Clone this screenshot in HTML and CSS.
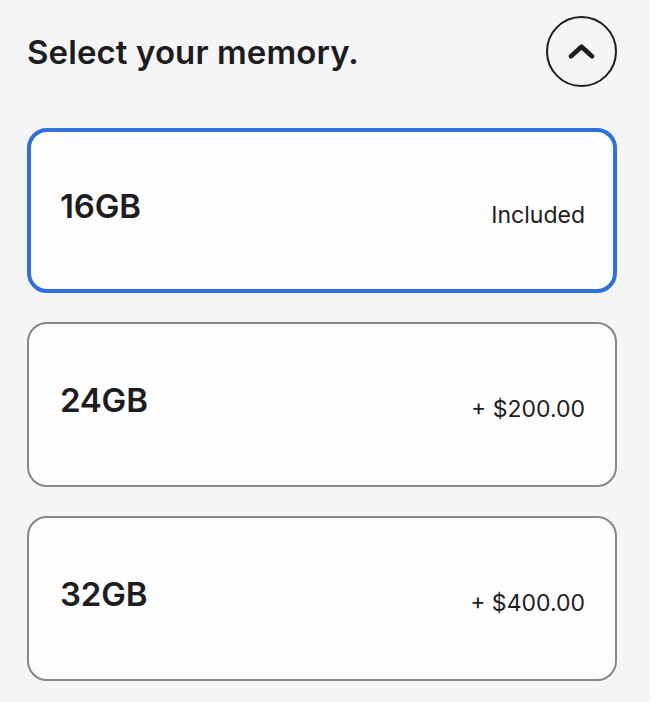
FILE: index.html
```html
<!DOCTYPE html>
<html lang="en">
<head>
<meta charset="utf-8">
<title>Select your memory</title>
<link rel="stylesheet" href="styles.css">
</head>
<body>
<main class="panel">
  <header class="header">
    <h2 class="title">Select your memory.</h2>
    <button class="toggle" aria-label="Collapse">
      <svg width="27" height="15" viewBox="0 0 27 15" aria-hidden="true">
        <path d="M3 12.3 L13.5 2.7 L24 12.3" fill="none" stroke="#1d1d1f" stroke-width="4.6" stroke-linecap="round" stroke-linejoin="round"/>
      </svg>
    </button>
  </header>
  <ul class="options">
    <li class="option selected">
      <span class="name">16GB</span>
      <span class="price">Included</span>
    </li>
    <li class="option">
      <span class="name">24GB</span>
      <span class="price">+ $200.00</span>
    </li>
    <li class="option">
      <span class="name">32GB</span>
      <span class="price">+ $400.00</span>
    </li>
  </ul>
</main>
</body>
</html>
```
FILE: styles.css
```css
html, body {
  margin: 0;
  padding: 0;
  background: #ffffff;
}

body {
  font-family: Inter, "Noto Sans", "Liberation Sans", sans-serif;
  color: #1d1d1f;
}

.panel {
  width: 650px;
  height: 702px;
  box-sizing: border-box;
  background: #f5f5f7;
  padding: 16px 33px 0 27px;
}

.header {
  display: flex;
  align-items: center;
  justify-content: space-between;
  height: 71px;
}

.title {
  margin: 2px 0 0 0;
  font-size: 33px;
  font-weight: 600;
  letter-spacing: 0.1px;
  line-height: 1.2;
}

.toggle {
  width: 71px;
  height: 71px;
  box-sizing: border-box;
  border: 2px solid #1d1d1f;
  border-radius: 50%;
  background: transparent;
  display: flex;
  align-items: center;
  justify-content: center;
  padding: 0;
  margin: 0;
}

.options {
  list-style: none;
  margin: 41px 0 0 0;
  padding: 0;
  display: flex;
  flex-direction: column;
  gap: 29px;
}

.option {
  height: 165px;
  box-sizing: border-box;
  border: 2px solid #86868b;
  border-radius: 20px;
  background: #fdfdfd;
  display: flex;
  align-items: center;
  justify-content: space-between;
  padding: 0 30px 0 31px;
}

.option.selected {
  border: 4px solid #2f70db;
  padding: 0 28px 0 29px;
}

.name {
  font-size: 33px;
  font-weight: 600;
  letter-spacing: -0.2px;
  margin-bottom: 9px;
}

.price {
  font-size: 23px;
  font-weight: 400;
  margin-top: 8px;
}
```
